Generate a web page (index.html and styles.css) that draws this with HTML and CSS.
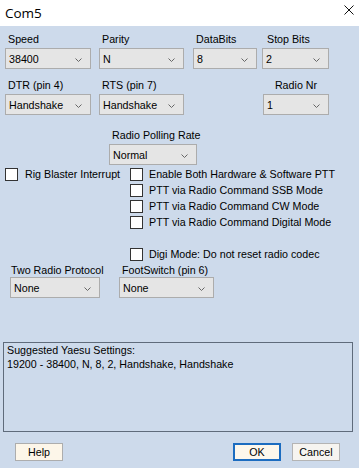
FILE: index.html
```html
<!DOCTYPE html>
<html>
<head>
<meta charset="utf-8">
<title>Com5</title>
<link rel="stylesheet" href="styles.css">
</head>
<body>
<div class="window">
  <div class="titlebar">
    <span class="title">Com5</span>
    <svg class="close" width="10" height="10" viewBox="0 0 10 10"><path d="M0.5 0.5L9.5 9.5M9.5 0.5L0.5 9.5" stroke="#111" stroke-width="1" fill="none"/></svg>
  </div>
  <div class="client">
    <div class="row">
      <div class="field f-speed"><div class="lbl">Speed</div><div class="select"><span>38400</span><svg class="chev" width="7" height="4" viewBox="0 0 7 4"><path d="M0.5 0.5L3.5 3.5L6.5 0.5" stroke="#666" fill="none"/></svg></div></div>
      <div class="field f-parity"><div class="lbl">Parity</div><div class="select"><span>N</span><svg class="chev" width="7" height="4" viewBox="0 0 7 4"><path d="M0.5 0.5L3.5 3.5L6.5 0.5" stroke="#666" fill="none"/></svg></div></div>
      <div class="field f-databits"><div class="lbl">DataBits</div><div class="select"><span>8</span><svg class="chev" width="7" height="4" viewBox="0 0 7 4"><path d="M0.5 0.5L3.5 3.5L6.5 0.5" stroke="#666" fill="none"/></svg></div></div>
      <div class="field f-stopbits"><div class="lbl lbl-stop">Stop Bits</div><div class="select"><span>2</span><svg class="chev" width="7" height="4" viewBox="0 0 7 4"><path d="M0.5 0.5L3.5 3.5L6.5 0.5" stroke="#666" fill="none"/></svg></div></div>
    </div>
    <div class="row row2">
      <div class="field f-speed"><div class="lbl">DTR (pin 4)</div><div class="select"><span>Handshake</span><svg class="chev" width="7" height="4" viewBox="0 0 7 4"><path d="M0.5 0.5L3.5 3.5L6.5 0.5" stroke="#666" fill="none"/></svg></div></div>
      <div class="field f-parity"><div class="lbl">RTS (pin 7)</div><div class="select"><span>Handshake</span><svg class="chev" width="7" height="4" viewBox="0 0 7 4"><path d="M0.5 0.5L3.5 3.5L6.5 0.5" stroke="#666" fill="none"/></svg></div></div>
      <div class="field f-radionr"><div class="lbl lbl-center">Radio Nr</div><div class="select"><span>1</span><svg class="chev" width="7" height="4" viewBox="0 0 7 4"><path d="M0.5 0.5L3.5 3.5L6.5 0.5" stroke="#666" fill="none"/></svg></div></div>
    </div>
    <div class="field polling"><div class="lbl">Radio Polling Rate</div><div class="select"><span>Normal</span><svg class="chev" width="7" height="4" viewBox="0 0 7 4"><path d="M0.5 0.5L3.5 3.5L6.5 0.5" stroke="#666" fill="none"/></svg></div></div>
    <div class="checks">
      <div class="col-left">
        <div class="chk"><span class="box"></span><span class="chk-text">Rig Blaster Interrupt</span></div>
      </div>
      <div class="col-right">
        <div class="chk"><span class="box"></span><span class="chk-text">Enable Both Hardware &amp; Software PTT</span></div>
        <div class="chk"><span class="box"></span><span class="chk-text">PTT via Radio Command SSB Mode</span></div>
        <div class="chk"><span class="box"></span><span class="chk-text">PTT via Radio Command CW Mode</span></div>
        <div class="chk"><span class="box"></span><span class="chk-text">PTT via Radio Command Digital Mode</span></div>
        <div class="chk chk-gap"><span class="box"></span><span class="chk-text">Digi Mode: Do not reset radio codec</span></div>
      </div>
    </div>
    <div class="row row3">
      <div class="field f-tworadio"><div class="lbl lbl-tight lbl-two">Two Radio Protocol</div><div class="select"><span>None</span><svg class="chev" width="7" height="4" viewBox="0 0 7 4"><path d="M0.5 0.5L3.5 3.5L6.5 0.5" stroke="#666" fill="none"/></svg></div></div>
      <div class="field f-foot"><div class="lbl lbl-tight">FootSwitch (pin 6)</div><div class="select"><span>None</span><svg class="chev" width="7" height="4" viewBox="0 0 7 4"><path d="M0.5 0.5L3.5 3.5L6.5 0.5" stroke="#666" fill="none"/></svg></div></div>
    </div>
    <div class="group">
      <div>Suggested Yaesu Settings:</div>
      <div>19200 - 38400, N, 8, 2, Handshake, Handshake</div>
    </div>
    <div class="buttons">
      <div class="btn btn-help">Help</div>
      <div class="btn btn-ok">OK</div>
      <div class="btn btn-cancel">Cancel</div>
    </div>
  </div>
</div>
</body>
</html>
```

FILE: styles.css
```css
html, body {
  margin: 0;
  padding: 0;
}
body {
  width: 359px;
  height: 468px;
  overflow: hidden;
  font-family: "Liberation Sans", Arial, sans-serif;
  font-size: 10.7px;
  color: #000;
}
.window {
  width: 359px;
  height: 468px;
  display: flex;
  flex-direction: column;
}
.titlebar {
  height: 26px;
  flex: none;
  background: #fff;
  display: flex;
  align-items: center;
  padding-left: 5px;
}
.title {
  font-family: "Open Sans", "Noto Sans", sans-serif;
  font-size: 13.5px;
  color: #000;
}
.close {
  margin-left: auto;
  margin-right: 5px;
  align-self: flex-start;
  margin-top: 5px;
}
.client {
  flex: 1;
  background: #cddaeb;
  padding: 7px 0 0 5px;
}
.row {
  display: flex;
  align-items: flex-end;
}
.row2 {
  margin-top: 10px;
}
.lbl {
  height: 13px;
  line-height: 13px;
  padding-left: 3px;
  margin-bottom: 2px;
  white-space: nowrap;
}
.lbl-stop {
  padding-left: 5px;
}
.lbl-center {
  padding-left: 0;
  text-align: center;
}
.lbl-tight {
  margin-bottom: 0;
}
.lbl-two {
  padding-left: 1px;
}
.select {
  box-sizing: border-box;
  height: 21px;
  border: 1px solid #acacac;
  background: #e5e5e5;
  display: flex;
  align-items: center;
  justify-content: space-between;
  padding: 2px 8px 0 3px;
  line-height: 17px;
  white-space: nowrap;
}
.chev {
  flex: none;
  margin-top: 1px;
}
.f-speed { width: 86px; }
.f-parity { width: 85px; margin-left: 8px; }
.f-databits { width: 64px; margin-left: 9px; }
.f-stopbits { width: 67px; margin-left: 5px; }
.f-radionr { width: 66px; margin-left: 79px; }
.polling {
  width: 88px;
  margin-left: 104px;
  margin-top: 14px;
}
.checks {
  display: flex;
  margin-top: 3px;
}
.col-left {
  width: 125px;
  flex: none;
}
.col-right {
  display: flex;
  flex-direction: column;
}
.chk {
  display: flex;
  align-items: flex-start;
  height: 16px;
  white-space: nowrap;
}
.chk-gap {
  margin-top: 16px;
}
.box {
  box-sizing: border-box;
  width: 13px;
  height: 13px;
  border: 1px solid #333;
  background: #fff;
  flex: none;
  margin-right: 6px;
}
.col-left .box {
  margin-right: 7px;
}
.chk-text {
  line-height: 13px;
}
.f-tworadio { width: 90px; margin-left: 5px; }
.f-foot { width: 95px; margin-left: 19px; }
.group {
  box-sizing: border-box;
  width: 350px;
  height: 90px;
  margin-top: 44px;
  margin-left: -2px;
  border: 1px solid #5f6b7b;
  padding: 0 3px;
  line-height: 14px;
}
.buttons {
  display: flex;
  margin-top: 11px;
  margin-right: 19px;
}
.btn {
  box-sizing: border-box;
  width: 48px;
  height: 18px;
  border: 1px solid #adadad;
  background: #fdf6e9;
  text-align: center;
  padding-top: 1px;
  line-height: 15px;
}
.btn-help {
  margin-left: 10px;
}
.btn-ok {
  margin-left: auto;
  border: 2px solid #1c6cc0;
  padding-top: 0;
  line-height: 14px;
  background: #fdf7ec;
}
.btn-cancel {
  margin-left: 11px;
  background: #f6f4f0;
  border-color: #b4b4b4;
}
```
